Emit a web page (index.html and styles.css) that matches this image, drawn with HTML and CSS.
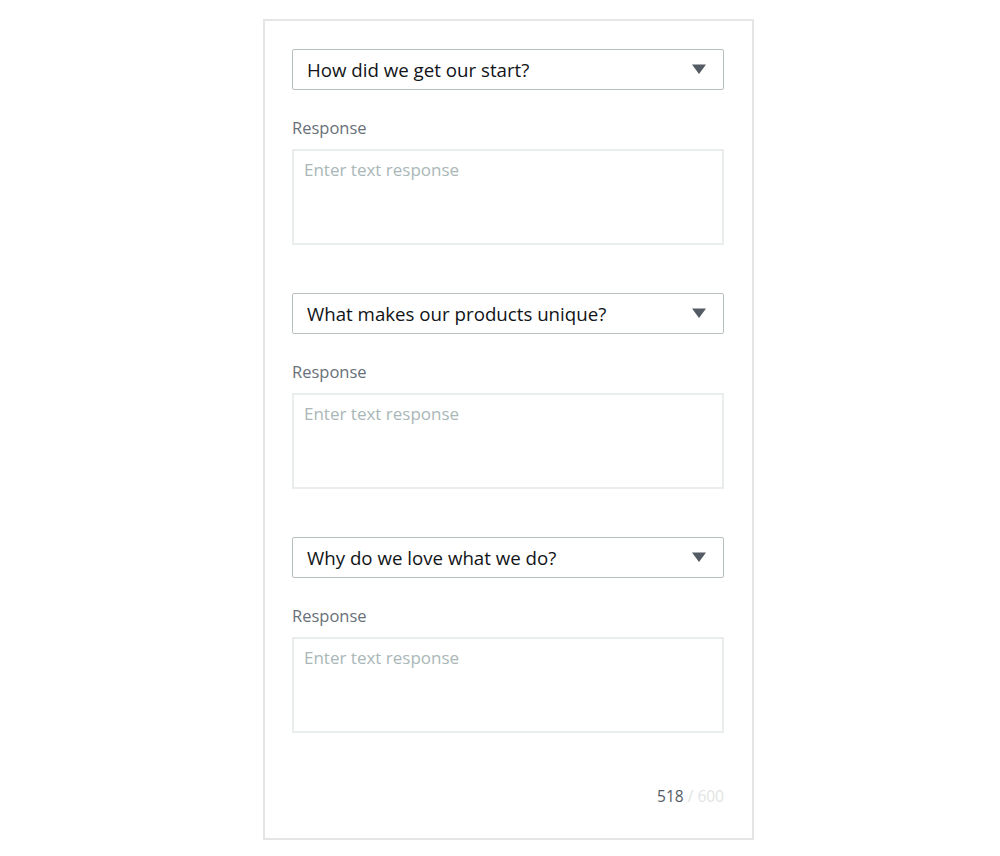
FILE: index.html
```html
<!DOCTYPE html>
<html>
<head>
<meta charset="utf-8">
<link rel="stylesheet" href="styles.css">
</head>
<body>
<div class="card">
  <div class="group">
    <div class="select"><span>How did we get our start?</span><svg class="caret" width="16" height="12" viewBox="0 0 16 12"><path d="M1 1.5 H15 L8 11 Z" fill="#545b64"/></svg></div>
    <div class="label">Response</div>
    <div class="textarea">Enter text response</div>
  </div>
  <div class="group">
    <div class="select"><span>What makes our products unique?</span><svg class="caret" width="16" height="12" viewBox="0 0 16 12"><path d="M1 1.5 H15 L8 11 Z" fill="#545b64"/></svg></div>
    <div class="label">Response</div>
    <div class="textarea">Enter text response</div>
  </div>
  <div class="group">
    <div class="select"><span>Why do we love what we do?</span><svg class="caret" width="16" height="12" viewBox="0 0 16 12"><path d="M1 1.5 H15 L8 11 Z" fill="#545b64"/></svg></div>
    <div class="label">Response</div>
    <div class="textarea">Enter text response</div>
  </div>
  <div class="counter"><span class="count">518</span> <span class="max">/ 600</span></div>
</div>
</body>
</html>
```
FILE: styles.css
```css
* { box-sizing: border-box; }
html, body { margin: 0; padding: 0; background: #ffffff; }
body {
  font-family: "Open Sans", "Noto Sans", sans-serif;
  padding-top: 19px;
}
.card {
  width: 491px;
  height: 821px;
  margin-left: 263px;
  border: 2px solid #e4e6e6;
  padding: 28px 28px 0 27px;
  display: flex;
  flex-direction: column;
}
.group {
  display: flex;
  flex-direction: column;
  margin-bottom: 48px;
}
.select {
  height: 41px;
  border: 1px solid #b8bfc0;
  border-radius: 2px;
  display: flex;
  align-items: center;
  justify-content: space-between;
  padding: 0 16px 1px 14px;
  font-size: 18.7px;
  color: #111418;
}
.caret { display: block; }
.label {
  margin-top: 27px;
  font-size: 16.5px;
  color: #687078;
  line-height: 22px;
}
.textarea {
  margin-top: 10px;
  height: 96px;
  border: 2px solid #eaeded;
  padding: 8px 10px;
  font-size: 17px;
  color: #aab7b8;
  line-height: 22px;
}
.counter {
  margin-top: 5px;
  text-align: right;
  font-size: 15.5px;
  line-height: 20px;
}
.count { color: #545b64; }
.max { color: #e1e4e4; }
```
